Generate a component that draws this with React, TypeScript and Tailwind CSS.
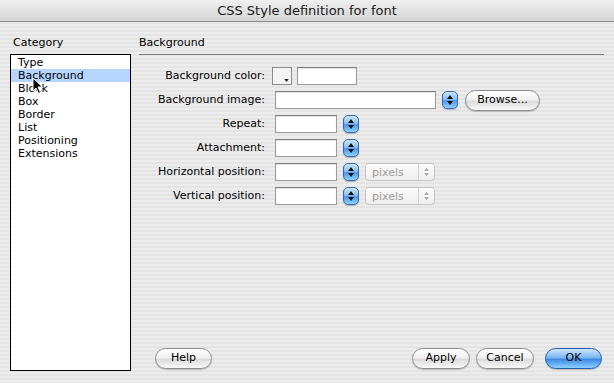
import React from "react";

const font = { fontFamily: '"Lucida Grande", "DejaVu Sans", sans-serif' };

function Stepper() {
  return (
    <div className="w-[16px] h-[18px] rounded-[5px] border border-[#3c6aa8] bg-[linear-gradient(to_bottom,#c9e4fe_0%,#8cc0f5_45%,#4f98ea_55%,#8fd0ff_100%)] flex flex-col items-center justify-center gap-[2px] shadow-[0_1px_1px_rgba(0,0,0,0.25)]">
      <svg width="6" height="4" viewBox="0 0 6 4">
        <path d="M3 0L6 4H0z" fill="#111" />
      </svg>
      <svg width="6" height="4" viewBox="0 0 6 4">
        <path d="M0 0H6L3 4z" fill="#111" />
      </svg>
    </div>
  );
}

function Input({ w }: { w: string }) {
  return <div className={`${w} h-[18px] bg-white border border-[#9a9a9a] border-t-[#7d7d7d] shadow-[inset_0_1px_1px_rgba(0,0,0,0.12)]`} />;
}

function PixelsSelect() {
  return (
    <div className="ml-[6px] w-[70px] h-[18px] rounded-[4px] border border-[#c4c4c4] bg-[linear-gradient(to_bottom,#fbfbfb,#eeeeee)] flex items-center text-[#9b9b9b]">
      <span className="flex-1 pl-[6px] leading-none">pixels</span>
      <div className="w-[16px] h-full border-l border-[#d0d0d0] flex flex-col items-center justify-center gap-[2px]">
        <svg width="5" height="3" viewBox="0 0 6 4">
          <path d="M3 0L6 4H0z" fill="#a0a0a0" />
        </svg>
        <svg width="5" height="3" viewBox="0 0 6 4">
          <path d="M0 0H6L3 4z" fill="#a0a0a0" />
        </svg>
      </div>
    </div>
  );
}

function AquaButton({ label, w, blue }: { label: string; w: string; blue?: boolean }) {
  return (
    <div
      className={`${w} h-[21px] rounded-full border flex items-center justify-center text-[11px] text-black ${
        blue
          ? "border-[#2a5ea8] bg-[linear-gradient(to_bottom,#cfe6fd_0%,#7bb7f2_45%,#3f8be3_55%,#8dd0ff_100%)]"
          : "border-[#8c8c8c] bg-[linear-gradient(to_bottom,#ffffff_0%,#f1f1f1_45%,#dcdcdc_55%,#f8f8f8_100%)]"
      } shadow-[0_1px_1px_rgba(0,0,0,0.2)]`}
    >
      {label}
    </div>
  );
}

function Row({ label, children }: { label: string; children: React.ReactNode }) {
  return (
    <div className="h-[24px] flex items-center">
      <div className="w-[135px] text-right pr-[1px]">{label}</div>
      <div className="flex items-center">{children}</div>
    </div>
  );
}

const categories = ["Type", "Background", "Block", "Box", "Border", "List", "Positioning", "Extensions"];

export default function App() {
  return (
    <div
      style={font}
      className="relative w-[614px] h-[383px] overflow-hidden text-[11px] text-black bg-[repeating-linear-gradient(to_bottom,#ececec_0px,#ececec_2px,#e4e4e4_2px,#e4e4e4_4px)]"
    >
      <div className="h-[22px] border-b border-[#8f8f8f] bg-[linear-gradient(to_bottom,#f0f0f0,#d4d4d4)] flex items-center justify-center text-[13px] text-[#1a1a1a]">
        CSS Style definition for font
      </div>
      <div className="flex h-[361px]">
        <div className="ml-[10px] w-[121px] pt-[14px] flex flex-col">
          <div className="h-[13px] leading-[13px] pl-[3px]">Category</div>
          <div className="mt-[5px] h-[317px] bg-white border border-black pt-[1px]">
            {categories.map((c) => (
              <div
                key={c}
                className={`h-[13px] leading-[13px] pl-[7px] ${c === "Background" ? "bg-[#b5d5ff]" : ""}`}
              >
                {c}
              </div>
            ))}
          </div>
        </div>
        <div className="flex-1 pt-[14px] flex flex-col">
          <div className="ml-[8px] mr-[10px] h-[19px] leading-[13px] pl-[-1px] border-b border-[#7c7c7c]">Background</div>
          <div className="mt-[9px]">
            <Row label="Background color:">
              <div className="ml-[6px] w-[20px] h-[18px] border border-[#8a8a8a] bg-[#f4f4f4] relative">
                <svg className="absolute right-[2px] bottom-[2px]" width="5" height="3" viewBox="0 0 6 4">
                  <path d="M0 0H6L3 4z" fill="#222" />
                </svg>
              </div>
              <div className="ml-[5px]">
                <Input w="w-[60px]" />
              </div>
            </Row>
            <Row label="Background image:">
              <div className="ml-[9px]">
                <Input w="w-[161px]" />
              </div>
              <div className="ml-[6px]">
                <Stepper />
              </div>
              <div className="ml-[7px]">
                <AquaButton label="Browse..." w="w-[75px]" />
              </div>
            </Row>
            <Row label="Repeat:">
              <div className="ml-[9px]">
                <Input w="w-[62px]" />
              </div>
              <div className="ml-[6px]">
                <Stepper />
              </div>
            </Row>
            <Row label="Attachment:">
              <div className="ml-[9px]">
                <Input w="w-[62px]" />
              </div>
              <div className="ml-[6px]">
                <Stepper />
              </div>
            </Row>
            <Row label="Horizontal position:">
              <div className="ml-[9px]">
                <Input w="w-[62px]" />
              </div>
              <div className="ml-[6px]">
                <Stepper />
              </div>
              <PixelsSelect />
            </Row>
            <Row label="Vertical position:">
              <div className="ml-[9px]">
                <Input w="w-[62px]" />
              </div>
              <div className="ml-[6px]">
                <Stepper />
              </div>
              <PixelsSelect />
            </Row>
          </div>
          <div className="flex-1" />
          <div className="mb-[14px] flex items-center">
            <div className="ml-[24px]">
              <AquaButton label="Help" w="w-[57px]" />
            </div>
            <div className="flex-1" />
            <AquaButton label="Apply" w="w-[58px]" />
            <div className="ml-[6px]">
              <AquaButton label="Cancel" w="w-[58px]" />
            </div>
            <div className="ml-[11px] mr-[12px]">
              <AquaButton label="OK" w="w-[57px]" blue />
            </div>
          </div>
        </div>
      </div>
      <svg className="absolute left-[32px] top-[77px]" width="12" height="18" viewBox="0 0 12 18">
        <path d="M1 1V14L4 11L6.5 16.5L8.5 15.5L6 10H10.5Z" fill="#000" stroke="#fff" strokeWidth="1" strokeLinejoin="round" />
      </svg>
    </div>
  );
}
